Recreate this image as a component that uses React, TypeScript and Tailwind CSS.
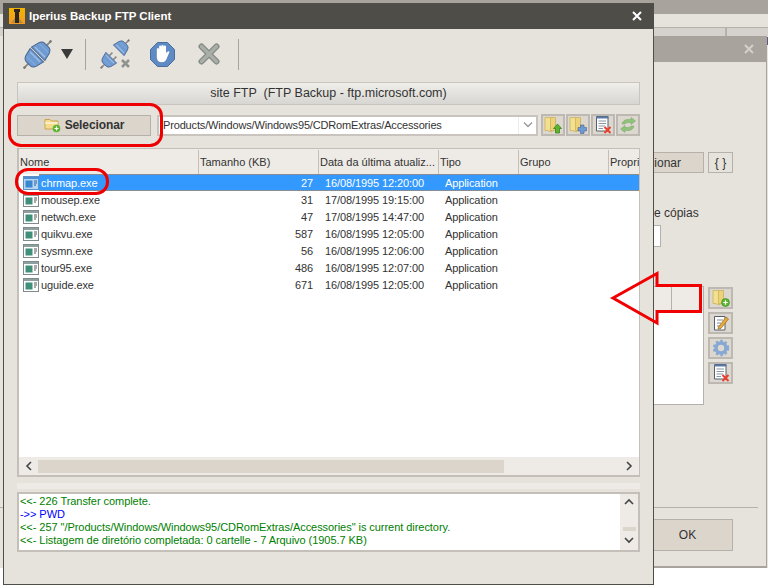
import type { ReactNode } from "react"

const rows = [
  { name: "chrmap.exe", size: "27", date: "16/08/1995 12:20:00" },
  { name: "mousep.exe", size: "31", date: "17/08/1995 19:15:00" },
  { name: "netwch.exe", size: "47", date: "17/08/1995 14:47:00" },
  { name: "quikvu.exe", size: "587", date: "16/08/1995 12:05:00" },
  { name: "sysmn.exe", size: "56", date: "16/08/1995 12:06:00" },
  { name: "tour95.exe", size: "486", date: "16/08/1995 12:07:00" },
  { name: "uguide.exe", size: "671", date: "16/08/1995 12:05:00" },
]

const columns = [
  { label: "Nome", cls: "w-[180px]" },
  { label: "Tamanho (KB)", cls: "w-[120px]" },
  { label: "Data da última atualiz...", cls: "w-[120px]" },
  { label: "Tipo", cls: "w-[80px]" },
  { label: "Grupo", cls: "w-[90px]" },
  { label: "Propri", cls: "w-[31px]" },
]

function PlugHalf({ prongs }: { prongs?: boolean }) {
  return (
    <g>
      <path d="M0 -8 V-14" stroke="#8a8a86" strokeWidth="2" />
      <circle cx="0" cy="-13.5" r="1.3" fill="#77776f" />
      {prongs && <path d="M-3.5 4 V9.5 M3.5 4 V9.5" stroke="#8a8a86" strokeWidth="2" />}
      <path d="M-9.5 4 L-7.5 -4 Q-6 -8 -3 -8 H3 Q6 -8 7.5 -4 L9.5 4 Z" fill="#6f9bd3" stroke="#48668f" strokeWidth="1" />
      <path d="M-7 1.5 H7" stroke="#a4c2e6" strokeWidth="1.2" />
      <path d="M-6 -4 H6" stroke="#85abdb" strokeWidth="1" />
    </g>
  )
}

function PlugIcon() {
  return (
    <svg width="31" height="31" viewBox="0 0 31 31">
      <g transform="translate(19 12) rotate(45)">
        <PlugHalf />
      </g>
      <g transform="translate(12 19) rotate(225)">
        <PlugHalf />
      </g>
    </svg>
  )
}

function PlugOffIcon() {
  return (
    <svg width="31" height="31" viewBox="0 0 31 31">
      <g transform="translate(21 9) rotate(45) scale(.8)">
        <PlugHalf />
      </g>
      <g transform="translate(9 21) rotate(225) scale(.8)">
        <PlugHalf prongs />
      </g>
      <path d="M22 21 L29 28 M29 21 L22 28" stroke="#8f948f" strokeWidth="2.6" />
    </svg>
  )
}

function StopIcon() {
  return (
    <svg width="25" height="25" viewBox="0 0 25 25">
      <path d="M7.5 .5 H17.5 L24.5 7.5 V17.5 L17.5 24.5 H7.5 L.5 17.5 V7.5 Z" fill="#5f8bc4" stroke="#4a6f9f" />
      <g transform="translate(-1.8 -1.6) scale(1.15)">
        <path d="M7.5 8 Q7.5 6.5 8.5 6.5 T9.5 8 V5.5 Q9.5 4.5 10.5 4.5 T11.5 5.5 V5 Q11.5 4 12.5 4 T13.5 5 V5.5 Q13.5 4.5 14.5 4.5 T15.5 5.5 V11 L16.5 10 Q18 9 18.5 10 L15.5 17 Q14.5 19 12 19 Q8 19 7.5 15 Z" fill="#fff" />
      </g>
    </svg>
  )
}

function BigX() {
  return (
    <svg width="22" height="22" viewBox="0 0 22 22">
      <path d="M3.5 3.5 L18.5 18.5 M18.5 3.5 L3.5 18.5" stroke="#7f8880" strokeWidth="6" strokeLinecap="round" />
      <path d="M3.5 3.5 L18.5 18.5 M18.5 3.5 L3.5 18.5" stroke="#a9aea8" strokeWidth="3.6" strokeLinecap="round" />
    </svg>
  )
}

function Folder({ children }: { children?: ReactNode }) {
  return (
    <svg width="18" height="18" viewBox="0 0 18 18">
      <path d="M1 1.5 H6 L8 3 V16 L3 14.5 H1 Z" fill="#f2df8f" stroke="#c9ac55" strokeWidth=".7" />
      <path d="M6.5 1.5 H11.5 V14.5 H6.5 Z" fill="#ecd27a" stroke="#c9ac55" strokeWidth=".7" />
      {children}
    </svg>
  )
}

function PlusBadge() {
  return (
    <>
      <circle cx="13.5" cy="13.5" r="4" fill="#5cb531" stroke="#3f8a1d" strokeWidth=".6" />
      <path d="M11.3 13.5 H15.7 M13.5 11.3 V15.7" stroke="#fff" strokeWidth="1.2" />
    </>
  )
}

function DocX() {
  return (
    <svg width="18" height="18" viewBox="0 0 18 18">
      <path d="M2.5 .5 H14 V15 H2.5 Z" fill="#fff" stroke="#55606e" />
      <path d="M2 .5 H14.5 V2.5 H2 Z" fill="#5a7ba8" />
      <path d="M4.5 5 H12 M4.5 7.5 H12 M4.5 10 H11 M4.5 12.5 H9" stroke="#7d8a9c" strokeWidth=".9" />
      <path d="M10.5 11 L16.5 17 M16.5 11 L10.5 17" stroke="#e8402a" strokeWidth="2" />
    </svg>
  )
}

function ToolButton({ children, className = "w-[24px] h-[22px]" }: { children: ReactNode; className?: string }) {
  return (
    <div className={`${className} flex items-center justify-center bg-[#dcd7cf] border-2 border-[#bdb9b2]`}>
      {children}
    </div>
  )
}

function FileIcon({ selected }: { selected?: boolean }) {
  return (
    <svg width="16" height="14" viewBox="0 0 16 14" className="shrink-0">
      <rect x=".5" y=".5" width="15" height="13" fill={selected ? "#b5d6f5" : "#fff"} stroke={selected ? "#5d8fc0" : "#7f8a8a"} />
      <rect x="1" y="1" width="14" height="2" fill={selected ? "#4d8fd0" : "#8fa0a0"} />
      <rect x="2.5" y="4.5" width="7" height="7" fill={selected ? "#3a86cf" : "#3f8f7a"} />
      <path d="M11 5 H14 M11 7 H14 M11 9 H13" stroke={selected ? "#2a5f95" : "#555"} strokeWidth="1" />
    </svg>
  )
}

function Chevron({ d }: { d: string }) {
  return (
    <svg width="10" height="10" viewBox="0 0 10 10">
      <path d={d} fill="none" stroke="#444" strokeWidth="1.6" />
    </svg>
  )
}

function BackgroundWindows() {
  return (
    <>
      <div className="absolute left-0 top-0 w-[768px] h-[568px] bg-[#e6e2dc]">
        <div className="h-[14px] bg-[#a8a39c]" />
        <div className="h-[13px]" />
        <div className="h-[1px] bg-[#b4b0aa]" />
        <div className="h-[8px] flex bg-[#d5d2cd]">
          <div className="w-[725px]" />
          <div className="w-[2px] bg-[#b4b0aa]" />
        </div>
      </div>
      <div className="absolute left-0 top-[507px] w-[3px] h-[1px] bg-[#b4b0aa]" />
      <div className="absolute left-[767px] top-[37px] w-[1px] h-[8px] bg-[#5a5a8a]" />
      <div className="absolute left-[600px] top-[36px] w-[167px] h-[532px] flex flex-col bg-[#e6e2dc] border-r border-b-2 border-[#a8a39c] text-[#333]">
        <div className="h-[26px] bg-[#a8a39c] flex items-center justify-end pr-[12px] shrink-0">
          <svg width="10" height="10" viewBox="0 0 10 10">
            <path d="M1 1 L9 9 M9 1 L1 9" stroke="#d4d1cb" strokeWidth="2" />
          </svg>
        </div>
        <div className="relative flex-1">
          <div className="absolute left-[50px] top-[90px] w-[54px] h-[21px] bg-[#dcd5cc] border border-[#b5b1aa] flex items-center justify-end pr-[22px] text-[12px]">
            cionar
          </div>
          <div className="absolute left-[108px] top-[90px] w-[25px] h-[21px] border border-[#b5b1aa] flex items-center justify-center text-[12px]">
            {"{ }"}
          </div>
          <div className="absolute left-[54px] top-[144px] text-[12px] leading-[15px]">e cópias</div>
          <div className="absolute left-[50px] top-[163px] w-[11px] h-[22px] bg-white border border-[#b5b1aa]" />
          <div className="absolute left-[50px] top-[224px] w-[54px] h-[119px] bg-white border-t border-r border-b border-[#b5b1aa]">
            <div className="h-[24px] bg-[#eeebe6] flex">
              <div className="w-[22px] border-r border-[#b5b1aa]" />
            </div>
          </div>
          <div className="absolute left-[108px] top-[225px] flex flex-col gap-[3px]">
            <ToolButton className="w-[25px] h-[22px]">
              <Folder>
                <PlusBadge />
              </Folder>
            </ToolButton>
            <ToolButton className="w-[25px] h-[22px]">
              <svg width="18" height="18" viewBox="0 0 18 18">
                <path d="M2.5 2.5 H13 V16 H2.5 Z" fill="#fff" stroke="#55606e" />
                <path d="M5 6 H11 M5 9 H9 M5 12 H8" stroke="#7d8a9c" />
                <path d="M6.5 13 L14 3 L16.5 5 L9 14.5 L6 15 Z" fill="#e6a93a" stroke="#8a5a1a" strokeWidth=".6" />
              </svg>
            </ToolButton>
            <ToolButton className="w-[25px] h-[22px]">
              <svg width="18" height="18" viewBox="0 0 18 18">
                <circle cx="9" cy="9" r="5" fill="none" stroke="#86a8d2" strokeWidth="3.5" />
                <circle cx="9" cy="9" r="7.2" fill="none" stroke="#86a8d2" strokeWidth="2" strokeDasharray="2.5 2.2" />
              </svg>
            </ToolButton>
            <ToolButton className="w-[25px] h-[22px]">
              <DocX />
            </ToolButton>
          </div>
          <div className="absolute left-[54px] top-[445px] w-[104px] h-[1px] bg-[#b4b0aa]" />
          <div className="absolute left-[50px] top-[457px] w-[83px] h-[32px] bg-[#dcd5cc] border border-[#b5b1aa] flex items-center justify-center pr-[8px] text-[12px]">
            OK
          </div>
        </div>
      </div>
    </>
  )
}

export default function App() {
  return (
    <div className="relative w-[768px] h-[586px] overflow-hidden bg-white font-['Liberation_Sans',sans-serif] text-[11px] text-[#333]">
      <BackgroundWindows />

      <div className="absolute left-[3px] top-[3px] w-[651px] h-[582px] flex flex-col bg-[#e6e2dc] border-l border-r border-b border-[#4f4d47]">
        {/* Title */}
        <div className="h-[26px] shrink-0 bg-[#4f4d47] flex items-center pl-[6px] pr-[12px] -mx-[1px]">
          <svg width="16" height="16" viewBox="0 0 16 16" className="mr-[4px]">
            <defs>
              <linearGradient id="lg" x1="0" y1="0" x2="0" y2="1">
                <stop offset="0" stopColor="#f0b400" />
                <stop offset="1" stopColor="#f59a23" />
              </linearGradient>
            </defs>
            <rect width="16" height="16" fill="url(#lg)" />
            <path d="M5 1 H11 V4 H10 V15 H6 V4 H5 Z" fill="#2a2620" />
            <path d="M2 15 L6 10 V15 Z M14 15 L10 10 V15 Z" fill="#b98a3a" />
          </svg>
          <span className="flex-1 text-white font-bold text-[11.5px] pt-[2px]">Iperius Backup FTP Client</span>
          <svg width="10" height="10" viewBox="0 0 10 10">
            <path d="M1 1 L9 9 M9 1 L1 9" stroke="#fff" strokeWidth="2" />
          </svg>
        </div>

        <div className="flex-1 px-[13px] flex flex-col">
          {/* Toolbar */}
          <div className="h-[53px] shrink-0 flex items-center pb-[3px]">
            <div className="ml-[5px] w-[31px]">
              <PlugIcon />
            </div>
            <svg width="12" height="10" viewBox="0 0 12 10" className="ml-[8px]">
              <path d="M0 0 H12 L6 10 Z" fill="#3a3a3a" />
            </svg>
            <div className="ml-[12px] w-[1px] h-[31px] bg-[#a8a49d]" />
            <div className="ml-[14px] w-[31px]">
              <PlugOffIcon />
            </div>
            <div className="ml-[19px]">
              <StopIcon />
            </div>
            <div className="ml-[23px]">
              <BigX />
            </div>
            <div className="ml-[18px] w-[1px] h-[31px] bg-[#a8a49d]" />
          </div>

          {/* Connection name */}
          <div className="h-[23px] shrink-0 flex items-center justify-center whitespace-pre border border-[#c9c5be] bg-gradient-to-b from-[#f0eee9] to-[#d8d6d2] text-[12.5px]">
            site FTP  (FTP Backup - ftp.microsoft.com)
          </div>

          {/* Path row */}
          <div className="mt-[9px] h-[22px] shrink-0 flex items-center">
            <div className="w-[134px] h-[21px] flex items-center justify-center gap-[4px] bg-[#dcd5cc] border border-[#b5b1aa] font-bold text-[12px] tracking-[-0.1px]">
              <svg width="17" height="16" viewBox="0 0 17 16">
                <path d="M1 2.5 H6 L7.5 4 H14 V12 H1 Z" fill="#f5dc8c" stroke="#c9a552" />
                <path d="M1 6 H14" stroke="#fff" />
                <circle cx="12.5" cy="11.5" r="3.8" fill="#5cb531" />
                <path d="M10.5 11.5 H14.5 M12.5 9.5 V13.5" stroke="#fff" strokeWidth="1.2" />
              </svg>
              Selecionar
            </div>
            <div className="ml-[6px] w-[381px] h-[21px] flex bg-[#efebe6] border-2 border-[#c9c5be]">
              <div className="flex-1 bg-white overflow-hidden whitespace-nowrap leading-[17px] text-[11px] tracking-[-0.16px] pl-[4px]">
                Products/Windows/Windows95/CDRomExtras/Accessories
              </div>
              <div className="w-[17px] ml-[1px] bg-white flex items-center justify-center">
                <svg width="10" height="8" viewBox="0 0 10 8">
                  <path d="M1 1.5 L5 5.5 L9 1.5" fill="none" stroke="#9a9a9a" strokeWidth="1.4" />
                </svg>
              </div>
            </div>
            <div className="ml-[3px] flex gap-[1px]">
              <ToolButton>
                <Folder>
                  <path d="M13.5 8 L17.5 12.5 H15.5 V17 H11.5 V12.5 H9.5 Z" fill="#5cb531" stroke="#2f7a14" strokeWidth=".7" />
                </Folder>
              </ToolButton>
              <ToolButton>
                <Folder>
                  <path d="M11.5 9 H15 V11.5 H17.5 V15 H15 V17.5 H11.5 V15 H9 V11.5 H11.5 Z" fill="#6f9bd3" stroke="#48668f" strokeWidth=".6" />
                </Folder>
              </ToolButton>
              <ToolButton>
                <DocX />
              </ToolButton>
              <ToolButton>
                <svg width="18" height="16" viewBox="0 0 18 16">
                  <path d="M3 7 Q4 2.5 9 2.5 H12 V0.5 L16.5 4 L12 7.5 V5.5 H9 Q6.5 5.5 6 7 Z" fill="#8fc27a" stroke="#7aa668" strokeWidth=".5" />
                  <path d="M15 9 Q14 13.5 9 13.5 H6 V15.5 L1.5 12 L6 8.5 V10.5 H9 Q11.5 10.5 12 9 Z" fill="#8fc27a" stroke="#7aa668" strokeWidth=".5" />
                </svg>
              </ToolButton>
            </div>
          </div>

          {/* File list */}
          <div className="mt-[12px] h-[329px] w-[623px] shrink-0 flex flex-col border-2 border-[#c4c0b9] border-r border-t bg-white overflow-hidden">
            <div className="h-[25px] shrink-0 flex bg-[#eeebe6] pt-[1px]">
              {columns.map((c) => (
                <div key={c.label} className={`${c.cls} shrink-0 pl-[1px] pt-[5px] whitespace-nowrap overflow-hidden border-r border-[#c4c0b9] text-[11px] leading-[14px]`}>
                  {c.label}
                </div>
              ))}
            </div>
            <div className="flex-1">
              {rows.map((r, i) => {
                const sel = i === 0
                return (
                  <div key={r.name} className="h-[17px] flex">
                    <div className="w-[20px] shrink-0 pl-[4px] flex items-center">
                      <FileIcon selected={sel} />
                    </div>
                    <div className={`flex-1 flex items-center pt-[1px] leading-[15px] tracking-[-0.1px] ${sel ? "bg-[#3399ff] text-white border-y border-dotted border-[#d9822b]" : ""}`}>
                      <span className="w-[160px] pl-[2px]">{r.name}</span>
                      <span className="w-[114px] text-right">{r.size}</span>
                      <span className="w-[126px] pl-[12px] whitespace-nowrap">{r.date}</span>
                      <span className="pl-[6px]">Application</span>
                    </div>
                  </div>
                )
              })}
            </div>
            <div className="h-[18px] shrink-0 flex items-center bg-[#eeebe6]">
              <div className="w-[19px] flex justify-center">
                <Chevron d="M7 1 L3 5 L7 9" />
              </div>
              <div className="w-[466px] h-[13px] bg-[#dcd5cc]" />
              <div className="flex-1 flex justify-end pr-[5px]">
                <Chevron d="M3 1 L7 5 L3 9" />
              </div>
            </div>
          </div>

          {/* Splitter */}
          <div className="mt-[6px] h-[6px] shrink-0 bg-[#eeebe6]" />

          {/* Log */}
          <div className="mt-[3px] h-[60px] w-[623px] shrink-0 flex border-2 border-[#c4c0b9] bg-white">
            <div className="flex-1 pt-[1px] pl-[1px] leading-[13px] text-[11px] tracking-[-0.05px] text-[#008000] whitespace-nowrap overflow-hidden">
              <div>{"<<- 226 Transfer complete."}</div>
              <div className="text-[#0000ff]">{"->> PWD"}</div>
              <div>{'<<- 257 "/Products/Windows/Windows95/CDRomExtras/Accessories" is current directory.'}</div>
              <div>{"<<- Listagem de diretório completada: 0 cartelle - 7 Arquivo (1905.7 KB)"}</div>
            </div>
            <div className="w-[18px] bg-[#eeebe6] flex flex-col items-center relative">
              <div className="mt-[3px] h-[10px]">
                <Chevron d="M1 7 L5 3 L9 7" />
              </div>
              <div className="mt-[20px] w-[13px] h-[4px] bg-[#dcd5cc]" />
              <div className="mt-[4px] h-[10px]">
                <Chevron d="M1 3 L5 7 L9 3" />
              </div>
            </div>
          </div>
        </div>
      </div>

      {/* Red annotations */}
      <div className="absolute left-[8px] top-[103px] w-[155px] h-[44px] rounded-[13px] border-[3px] border-[#ee0000]" />
      <div className="absolute left-[15px] top-[168px] w-[94px] h-[27px] rounded-[13px] border-[3px] border-[#ee0000]" />
      <svg width="100" height="60" viewBox="0 0 100 60" className="absolute left-[605px] top-[268px]">
        <path d="M8 30 L52 5.5 V17.5 H95.5 V43.5 H52 V55 Z" fill="none" stroke="#f00000" strokeWidth="3" strokeLinejoin="miter" />
      </svg>
    </div>
  )
}
